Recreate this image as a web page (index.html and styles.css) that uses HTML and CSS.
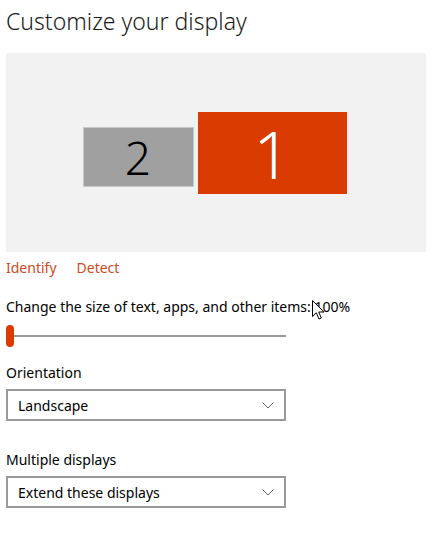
FILE: index.html
```html
<!DOCTYPE html>
<html>
<head>
<meta charset="utf-8">
<link rel="stylesheet" href="styles.css">
</head>
<body>
<div class="page">
  <h1 class="title">Customize your display</h1>
  <div class="canvas">
    <div class="monitors">
      <div class="mon mon2">2</div>
      <div class="mon mon1">1</div>
    </div>
  </div>
  <div class="links">
    <span class="link">Identify</span>
    <span class="link">Detect</span>
  </div>
  <div class="scale-label">Change the size of text, apps, and other items: 100%</div>
  <div class="slider">
    <div class="thumb"></div>
    <div class="track"></div>
  </div>
  <div class="label">Orientation</div>
  <div class="select"><span>Landscape</span>
    <svg class="chev" width="12" height="7" viewBox="0 0 12 7"><path d="M0.5 0.5 L6 6 L11.5 0.5" fill="none" stroke="#666" stroke-width="1"/></svg>
  </div>
  <div class="label second">Multiple displays</div>
  <div class="select"><span>Extend these displays</span>
    <svg class="chev" width="12" height="7" viewBox="0 0 12 7"><path d="M0.5 0.5 L6 6 L11.5 0.5" fill="none" stroke="#666" stroke-width="1"/></svg>
  </div>
  <svg class="cursor" width="13" height="20" viewBox="0 0 13 20"><path d="M0.5 0.5 L0.5 16.5 L4.3 12.8 L7 19 L9.3 18 L6.7 12 L12 12 Z" fill="#fff" stroke="#000" stroke-width="1" stroke-linejoin="miter"/></svg>
</div>
</body>
</html>
```
FILE: styles.css
```css
* { box-sizing: border-box; }
html, body { margin: 0; padding: 0; background: #fff; }
body { font-family: "Noto Sans", "Open Sans", sans-serif; color: #000; }
.page { position: relative; padding: 0 6px; width: 437px; height: 543px; }
.title { margin: 0; padding-top: 5px; height: 53px; font-size: 23px; font-weight: 300; line-height: 32px; color: #1a1a1a; }
.canvas { width: 420px; height: 199px; background: #f2f2f2; display: flex; align-items: center; justify-content: center; }
.monitors { display: flex; align-items: center; gap: 4px; margin-left: -3px; margin-top: 1px; }
.mon { display: flex; align-items: center; justify-content: center; font-weight: 300; line-height: 1; }
.mon2 { width: 111px; height: 60px; background: #a0a0a0; border: 1px solid #c8c8c8; color: #000; font-size: 46px; margin-top: 8px; }
.mon1 { width: 149px; height: 82px; background: #da3b01; color: #fff; font-size: 66px; }
.links { display: flex; gap: 20px; margin-top: 5px; height: 22px; font-size: 14px; line-height: 22px; color: #d04a1e; }
.scale-label { margin-top: 18px; font-size: 14px; line-height: 20px; color: #000; }
.slider { position: relative; display: flex; align-items: center; width: 280px; height: 22px; margin-top: 8px; }
.thumb { width: 8px; height: 22px; border-radius: 4px; background: #da3b01; flex: none; }
.track { flex: 1; height: 2px; background: #999; }
.label { margin-top: 16px; font-size: 14px; line-height: 20px; color: #000; }
.label.second { margin-top: 29px; }
.select { margin-top: 6px; width: 280px; height: 32px; border: 2px solid #999; display: flex; align-items: center; justify-content: space-between; padding: 0 10px; font-size: 14px; color: #000; }
.cursor { position: absolute; left: 312px; top: 300px; }
```
